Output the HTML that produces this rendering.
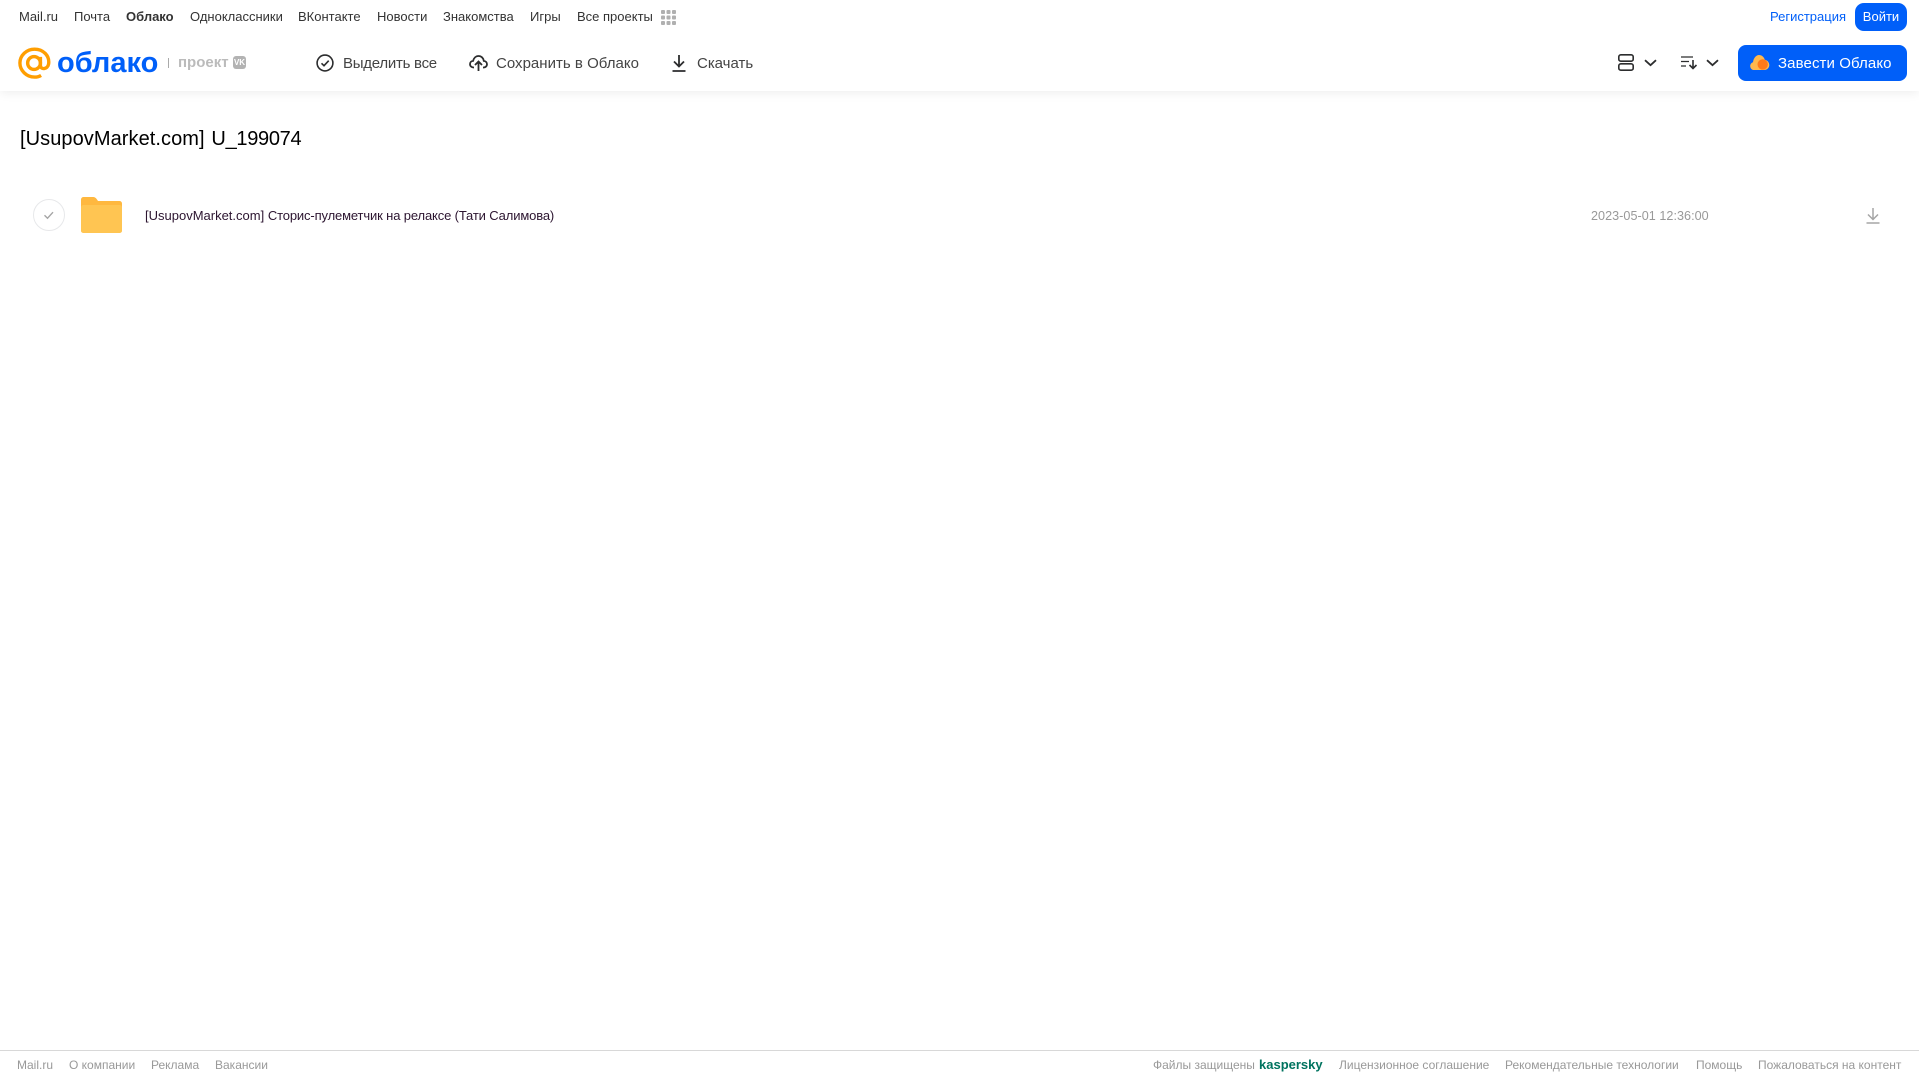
<!DOCTYPE html>
<html lang="ru"><head><meta charset="utf-8"><title>Облако</title>
<style>
html,body{margin:0;padding:0;background:#fff;}
body{width:1919px;height:1079px;position:relative;overflow:hidden;font-family:"Liberation Sans",sans-serif;}
.t{position:absolute;white-space:nowrap;line-height:20px;}
.n{top:7px;font-size:13px;color:#333;}
.h{top:54px;font-size:15px;color:#444;line-height:20px;}
.f{top:1055px;font-size:12px;color:#999;}
svg{position:absolute;display:block;}
</style></head><body>
<div style="position:absolute;left:0;top:0;width:1919px;height:91px;background:#fff;box-shadow:0 2px 10px rgba(0,0,0,.07);"></div>
<div class="t n" style="left:19px;">Mail.ru</div>
<div class="t n" style="left:74px;">Почта</div>
<div class="t n" style="left:126px;font-weight:bold;">Облако</div>
<div class="t n" style="left:190px;">Одноклассники</div>
<div class="t n" style="left:298px;">ВКонтакте</div>
<div class="t n" style="left:377px;">Новости</div>
<div class="t n" style="left:443px;">Знакомства</div>
<div class="t n" style="left:530px;">Игры</div>
<div class="t n" style="left:577px;">Все проекты</div>
<svg style="left:661px;top:10px;" width="15" height="15" fill="#b0b0b0"><rect x="0" y="0" width="4" height="4" rx="1"/><rect x="5.500" y="0" width="4" height="4" rx="1"/><rect x="11" y="0" width="4" height="4" rx="1"/><rect x="0" y="5.500" width="4" height="4" rx="1"/><rect x="5.500" y="5.500" width="4" height="4" rx="1"/><rect x="11" y="5.500" width="4" height="4" rx="1"/><rect x="0" y="11" width="4" height="4" rx="1"/><rect x="5.500" y="11" width="4" height="4" rx="1"/><rect x="11" y="11" width="4" height="4" rx="1"/></svg>
<div class="t n" style="left:1770px;color:#005ff9;">Регистрация</div>
<div style="position:absolute;left:1855px;top:3px;width:52px;height:28px;border-radius:9px;background:#005ff9;color:#fff;font-size:13px;line-height:28px;text-align:center;">Войти</div>

<!-- logo -->
<svg style="left:18px;top:47px;" width="33" height="32" viewBox="0 0 35 34" fill="none" stroke="#ff9e00" stroke-width="3.600"><circle cx="17" cy="17" r="6.800"/><path d="M23.800 10.500V19.500c0 5 7.700 4.500 8.700-1.500C33.800 9 26.500 2.300 17.500 2.300 9 2.300 2 9 2 17s7 15 15.500 15c2.800 0 5-.6 7-1.800"/></svg>
<div class="t" style="left:57px;top:44px;font-size:29px;line-height:38px;font-weight:bold;color:#005ff9;">облако</div>
<div style="position:absolute;left:168px;top:58px;width:1px;height:10px;background:#aaa;"></div>
<div class="t" style="left:178px;top:53px;font-size:15px;font-weight:bold;color:#bbb;">проект</div>
<div style="position:absolute;left:233px;top:56px;width:13px;height:13px;border-radius:3px;background:#b3b3b3;color:#fff;font-size:8px;font-weight:bold;line-height:13px;text-align:center;">VK</div>

<svg style="left:316px;top:54px;" width="18" height="18" fill="none" stroke="#2c2d2e" stroke-width="1.600"><circle cx="9" cy="9" r="7.900"/><path d="M5.500 9.300l2.500 2.400 4.700-5"/></svg>
<div class="t h" style="left:343px;letter-spacing:-.26px;">Выделить все</div>
<svg style="left:469px;top:54px;" width="19" height="18" fill="none" stroke="#2c2d2e" stroke-width="1.800"><path d="M5 13.500H4.500C2.500 13.500 1 12 1 10.200 1 8.400 2.400 7 4.100 6.900 4.800 4.200 6.800 2 9.500 2c2.900 0 5 2.200 5.300 4.900 1.900.2 3.200 1.600 3.200 3.400 0 1.800-1.500 3.200-3.400 3.200H14"/><path d="M9.500 17V8M6 11l3.500-3.500L13 11"/></svg>
<div class="t h" style="left:496px;letter-spacing:.02px;">Сохранить в Облако</div>
<svg style="left:672px;top:54px;" width="14" height="18" fill="none" stroke="#2c2d2e" stroke-width="1.800"><path d="M7 1v11M2 7.500l5 5 5-5M0.500 17h13"/></svg>
<div class="t h" style="left:697px;letter-spacing:-.02px;">Скачать</div>

<svg style="left:1618px;top:54px;" width="16" height="17" fill="none" stroke="#2c2d2e" stroke-width="1.600"><rect x=".8" y=".8" width="14.400" height="6.400" rx="2"/><rect x=".8" y="9.800" width="14.400" height="6.400" rx="2"/></svg>
<svg style="left:1644px;top:59px;" width="13" height="8" fill="none" stroke="#2c2d2e" stroke-width="1.800"><path d="M1 1.200l5.500 5 5.500-5"/></svg>
<svg style="left:1681px;top:56px;" width="17" height="14" fill="none" stroke="#2c2d2e" stroke-width="1.300"><path d="M0 1h12M0 5.500h8M0 10h5"/><path stroke-width="1.600" d="M12 4v8.500M8.500 9l3.500 3.500L15.500 9"/></svg>
<svg style="left:1706px;top:59px;" width="13" height="8" fill="none" stroke="#2c2d2e" stroke-width="1.800"><path d="M1 1.200l5.500 5 5.500-5"/></svg>
<div style="position:absolute;left:1738px;top:45px;width:169px;height:36px;border-radius:8px;background:#005ff9;"></div>
<svg style="left:1750px;top:54px;" width="20" height="17"><path fill="#ffb84d" d="M4 16C1.800 16 .2 14.200.2 12.100.2 10.300 1.400 8.800 3 8.300 3.500 4.200 6 1 9 1c2.800 0 5 2 5.800 4.700 2.400.4 4.500 2.600 4.500 5.300 0 2.800-2.200 5-5 5z"/><circle cx="12.700" cy="10.400" r="5.200" fill="#ff7a1a"/></svg>
<div class="t" style="left:1778px;top:54px;font-size:15px;color:#fff;letter-spacing:.1px;">Завести Облако</div>

<div class="t" style="left:20px;top:125px;font-size:20px;line-height:28px;color:#000;word-spacing:1.200px;"><span style="letter-spacing:.07px;">[UsupovMarket.com]</span> <span style="letter-spacing:-.3px;">U_199074</span></div>

<svg style="left:33px;top:199px;" width="32" height="32" fill="none"><circle cx="16" cy="16" r="15.500" stroke="#e7e8ea"/><path d="M11.500 16.200l3 3 5.500-6" stroke="#a5a5a5" stroke-width="1.400"/></svg>
<svg style="left:81px;top:197px;" width="41" height="36"><path fill="#ffb83f" d="M2.500 0h9c2.500 0 3.500 1 4.500 2.500L17 4H38.500A2.500 2.500 0 0 1 41 6.500V33.500A2.500 2.500 0 0 1 38.500 36H2.500A2.500 2.500 0 0 1 0 33.500V2.500A2.500 2.500 0 0 1 2.500 0z"/><rect y="8" width="41" height="28" rx="2.500" fill="#ffc552"/></svg>
<div class="t" style="left:145px;top:206px;font-size:13px;color:#2c1530;"><span>[UsupovMarket.com]</span> <span style="letter-spacing:-.14px;">Сторис-пулеметчик на релаксе (Тати Салимова)</span></div>
<div class="t" style="left:1591px;top:206px;font-size:12.600px;color:#999;letter-spacing:.04px;">2023-05-01 12:36:00</div>
<svg style="left:1866px;top:207px;" width="14" height="17" fill="none" stroke="#a5a5a5" stroke-width="1.500"><path d="M7 1v11M2 7.500l5 5 5-5M.5 16h13"/></svg>

<div style="position:absolute;left:0;top:1050px;width:1919px;height:1px;background:#d8d8d8;"></div>
<div class="t f" style="left:17px;">Mail.ru</div>
<div class="t f" style="left:69px;">О компании</div>
<div class="t f" style="left:151px;">Реклама</div>
<div class="t f" style="left:215px;">Вакансии</div>
<div class="t f" style="left:1153px;">Файлы защищены</div>
<div class="t f" style="left:1259px;font-size:13px;font-weight:bold;color:#00735f;">kaspersky</div>
<div class="t f" style="left:1339px;">Лицензионное соглашение</div>
<div class="t f" style="left:1505px;">Рекомендательные технологии</div>
<div class="t f" style="left:1696px;">Помощь</div>
<div class="t f" style="left:1758px;">Пожаловаться на контент</div>
</body></html>
